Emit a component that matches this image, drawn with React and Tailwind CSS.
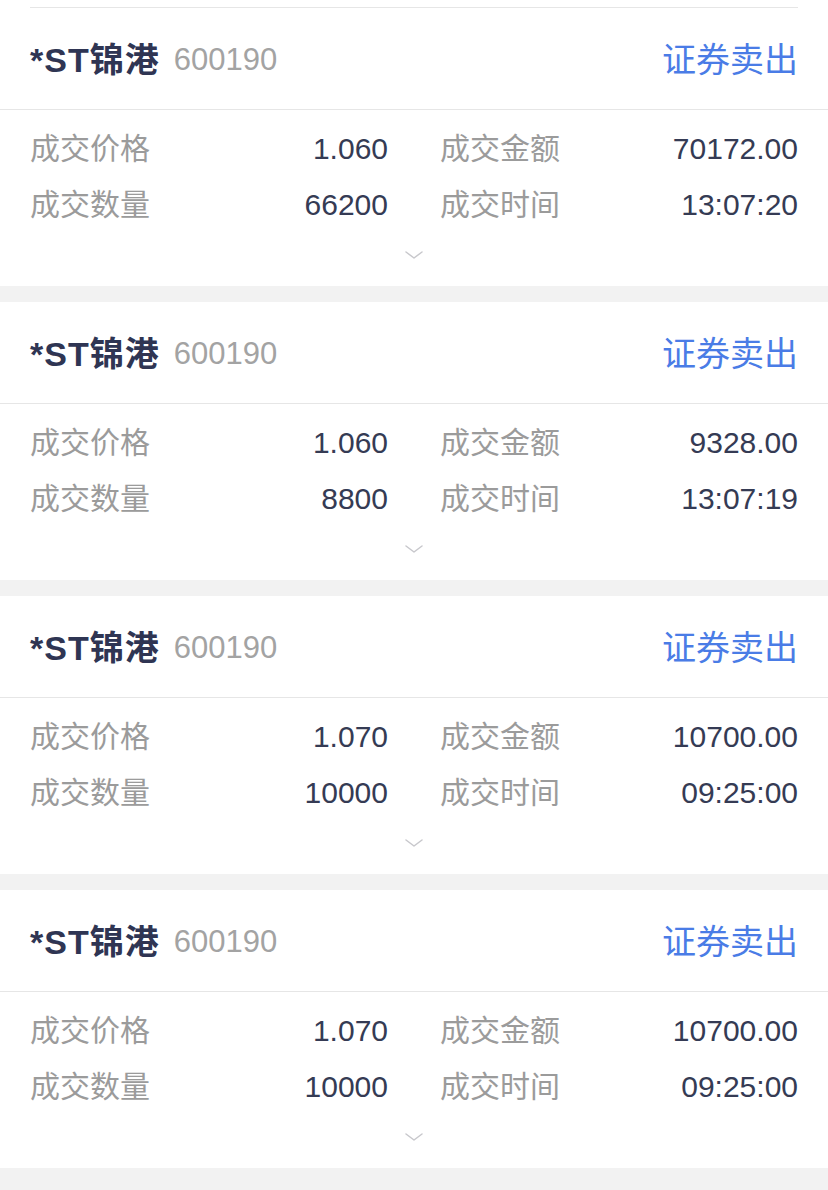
import React from "react"

const trades = [
	{ price: "1.060", amount: "70172.00", qty: "66200", time: "13:07:20" },
	{ price: "1.060", amount: "9328.00", qty: "8800", time: "13:07:19" },
	{ price: "1.070", amount: "10700.00", qty: "10000", time: "09:25:00" },
	{ price: "1.070", amount: "10700.00", qty: "10000", time: "09:25:00" },
]

const Cell = ({ label, value }) => (
	<div className="flex items-center justify-between h-[56px]">
		<span className="text-[30px] text-[#9b9b9b]">{label}</span>
		<span className="text-[30px] text-[#353b54]">{value}</span>
	</div>
)

const TradeCard = ({ trade }) => (
	<div className="bg-white">
		{/* 头部 */}
		<div className="flex items-center justify-between h-[102px] pt-[4px] px-[30px] border-b border-[#e6e6e6]">
			<div className="flex items-center">
				<span className="text-[34px] font-bold tracking-[1px] text-[#2f3553]">*ST锦港</span>
				<span className="ml-[14px] text-[31px] text-[#a3a3a3]">600190</span>
			</div>
			<span className="text-[34px] text-[#4a7ce6]">证券卖出</span>
		</div>

		{/* 内容 */}
		<div className="pt-[10px] px-[30px]">
			<div className="grid grid-cols-2 gap-x-[52px]">
				<Cell label="成交价格" value={trade.price} />
				<Cell label="成交金额" value={trade.amount} />
				<Cell label="成交数量" value={trade.qty} />
				<Cell label="成交时间" value={trade.time} />
			</div>
			<div className="flex items-center justify-center h-[46px] mb-[8px]">
				<svg width="18" height="8" viewBox="0 0 18 8" fill="none">
					<path d="M1 1l8 6 8-6" stroke="#c8c8cc" strokeWidth="1.5" strokeLinecap="round" strokeLinejoin="round" />
				</svg>
			</div>
		</div>
	</div>
)

export default function App() {
	return (
		<div className="min-h-[1190px] bg-[#f2f2f2] font-['Liberation_Sans','Noto_Sans_CJK_SC',sans-serif]">
			<div className="bg-white pt-[7px]">
				<div className="mx-[30px] border-t border-[#e6e6e6]" />
			</div>
			<div className="flex flex-col gap-[16px]">
				{trades.map((t, i) => (
					<TradeCard key={i} trade={t} />
				))}
			</div>
		</div>
	)
}
